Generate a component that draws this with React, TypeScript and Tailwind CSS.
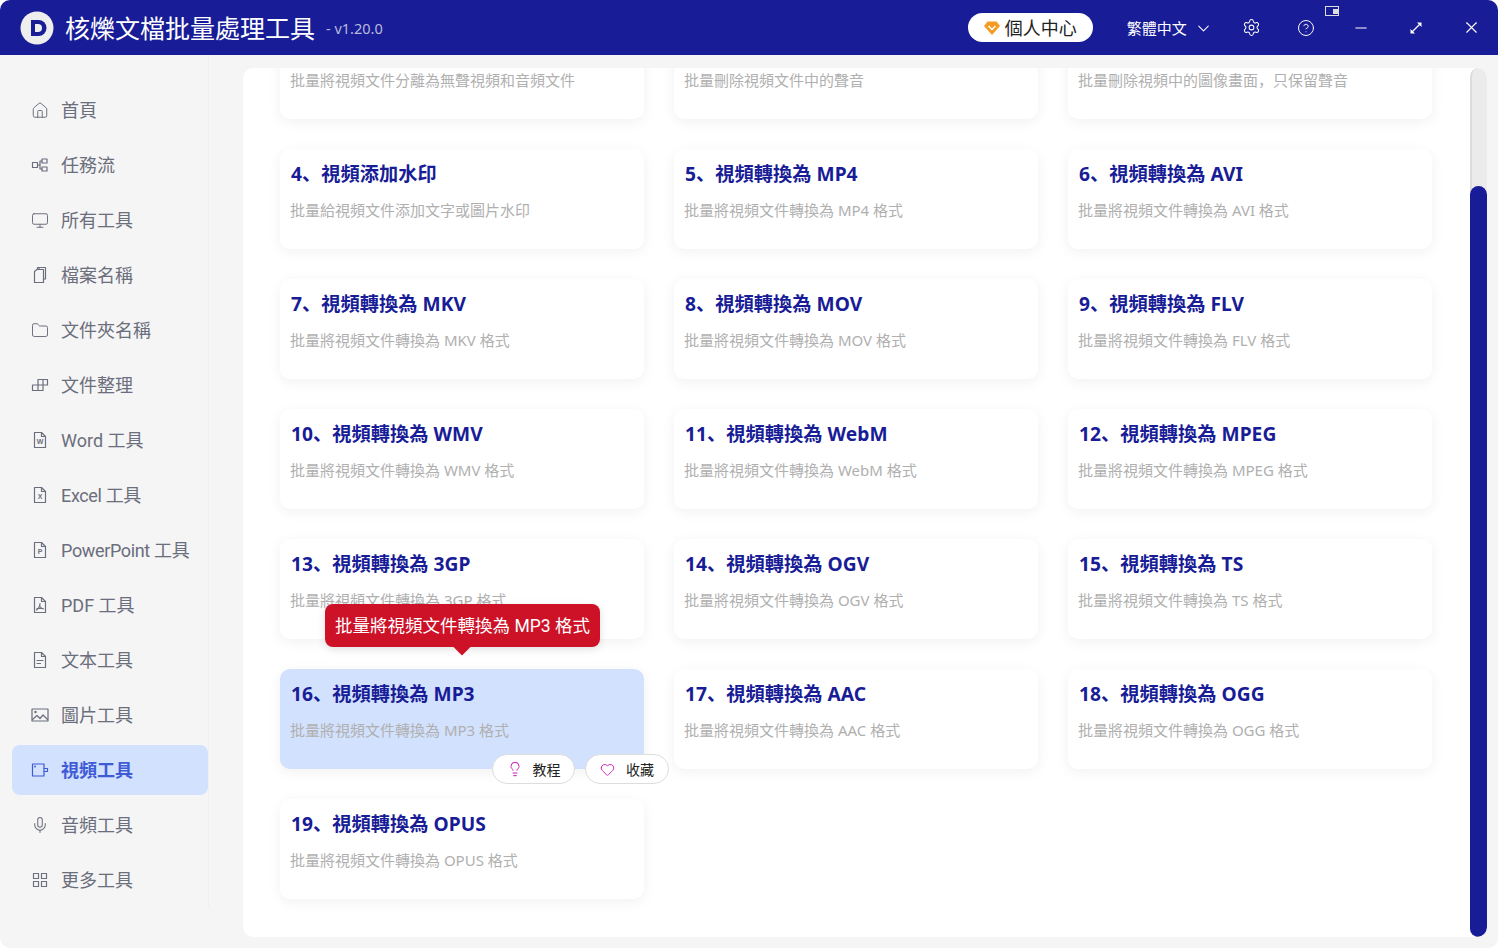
import React from "react";
import { House, Monitor, Folder, Settings, CircleHelp, ChevronDown, Minus, X, Lightbulb, Heart, Mic } from "lucide-react";

const S = ({ children, active }: { children: React.ReactNode; active?: boolean }) => (
  <svg width="18" height="18" viewBox="0 0 18 18" fill="none" stroke={active ? "#3f5bd6" : "#6b6e7c"} strokeWidth="1.2" strokeLinejoin="round" strokeLinecap="round">
    {children}
  </svg>
);
const FileBase = ({ children }: { children?: React.ReactNode }) => (
  <S>
    <path d="M3.500 1.500h7l4 4v11h-11z" />
    <path d="M10.500 1.500v4h4" />
    {children}
  </S>
);
const Letter = ({ c }: { c: string }) => (
  <text x="9" y="13" fontSize="7" fontWeight="700" textAnchor="middle" fill="#6b6e7c" stroke="none" fontFamily="Liberation Sans, sans-serif">{c}</text>
);

const nav: { label: string; icon: React.ReactNode; active?: boolean; track?: string }[] = [
  { label: "首頁", icon: <House size={19} color="#6b6e7c" strokeWidth={1.3} /> },
  { label: "任務流", icon: <S><rect x="1.500" y="6.500" width="5" height="5" /><rect x="11" y="3" width="5" height="4" /><rect x="11" y="11" width="5" height="4" /><path d="M6.500 9H9V5h2M9 9v4h2" /></S> },
  { label: "所有工具", icon: <Monitor size={19} color="#6b6e7c" strokeWidth={1.3} /> },
  { label: "檔案名稱", icon: <S><path d="M6.500 3.500V1.500h8v11.500h-2" /><path d="M3.500 5.500l2.500-2h6.500v13h-9z" /><path d="M8 3.500V1.500" /></S> },
  { label: "文件夾名稱", icon: <Folder size={19} color="#6b6e7c" strokeWidth={1.3} /> },
  { label: "文件整理", icon: <S><path d="M1.500 9h5.500v5.500H1.500zM7 9h5v5.500H7zM7 9V3.500h5V9M12 3.500h4.500V9H12" /></S> },
  { label: "Word 工具", icon: <FileBase><Letter c="W" /></FileBase> },
  { label: "Excel 工具", track: "tracking-[-0.35px]", icon: <FileBase><Letter c="X" /></FileBase> },
  { label: "PowerPoint 工具", track: "tracking-[-0.35px]", icon: <FileBase><Letter c="P" /></FileBase> },
  { label: "PDF 工具", icon: <FileBase><path d="M9 7.500c0 3-1.500 5-3.500 6.500M9 10.500c1 1.500 2 2.200 3.500 2.500M6 12.500h6" /></FileBase> },
  { label: "文本工具", icon: <FileBase><path d="M6 9.500h6M6 12.500h3.500" /></FileBase> },
  { label: "圖片工具", icon: <S><rect x="1" y="3" width="16" height="12" /><path d="M1.500 13.500l4.500-4 3 3 3-3.500 4.500 4.500" /><circle cx="4.500" cy="6" r=".6" /></S> },
  { label: "視頻工具", active: true, icon: <S active><rect x="1.500" y="3" width="11.500" height="12" /><path d="M13 7.500h3.500v3H13" /><circle cx="4" cy="5.500" r=".4" /></S> },
  { label: "音頻工具", icon: <Mic size={20} color="#6b6e7c" strokeWidth={1.4} /> },
  { label: "更多工具", icon: <S><rect x="2.500" y="2.500" width="5" height="5" /><rect x="10.500" y="2.500" width="5" height="5" /><rect x="2.500" y="10.500" width="5" height="5" /><rect x="10.500" y="10.500" width="5" height="5" /></S> },
];

const cards: [string, string][] = [
  ["3、", "批量將視頻文件分離為無聲視頻和音頻文件"],
  ["", "批量刪除視頻文件中的聲音"],
  ["", "批量刪除視頻中的圖像畫面，只保留聲音"],
  ["4、視頻添加水印", "批量給視頻文件添加文字或圖片水印"],
  ["5、視頻轉換為 MP4", "批量將視頻文件轉換為 MP4 格式"],
  ["6、視頻轉換為 AVI", "批量將視頻文件轉換為 AVI 格式"],
  ["7、視頻轉換為 MKV", "批量將視頻文件轉換為 MKV 格式"],
  ["8、視頻轉換為 MOV", "批量將視頻文件轉換為 MOV 格式"],
  ["9、視頻轉換為 FLV", "批量將視頻文件轉換為 FLV 格式"],
  ["10、視頻轉換為 WMV", "批量將視頻文件轉換為 WMV 格式"],
  ["11、視頻轉換為 WebM", "批量將視頻文件轉換為 WebM 格式"],
  ["12、視頻轉換為 MPEG", "批量將視頻文件轉換為 MPEG 格式"],
  ["13、視頻轉換為 3GP", "批量將視頻文件轉換為 3GP 格式"],
  ["14、視頻轉換為 OGV", "批量將視頻文件轉換為 OGV 格式"],
  ["15、視頻轉換為 TS", "批量將視頻文件轉換為 TS 格式"],
  ["16、視頻轉換為 MP3", "批量將視頻文件轉換為 MP3 格式"],
  ["17、視頻轉換為 AAC", "批量將視頻文件轉換為 AAC 格式"],
  ["18、視頻轉換為 OGG", "批量將視頻文件轉換為 OGG 格式"],
  ["19、視頻轉換為 OPUS", "批量將視頻文件轉換為 OPUS 格式"],
];

function Card({ title, desc, index }: { title: string; desc: string; index: number }) {
  const hot = index === 15;
  const first = index < 3;
  return (
    <div className={`relative h-[100px] rounded-[10px] px-[10px] shadow-[0_3px_14px_rgba(0,0,0,0.06)] ${hot ? "bg-[#d2e1fd]" : "bg-white"}`}>
      <div className={`ml-[1px] h-[26px] pt-[12px] whitespace-nowrap text-[19.2px] font-bold leading-[26px] tracking-[0.05px] text-[#181c96] ${first ? "invisible" : ""}`}>{title}</div>
      <div className="mt-[25px] whitespace-nowrap text-[15px] leading-[20px] text-[#b0b0b0]">{desc}</div>
      {hot && (
        <>
          <div className="absolute left-[45px] top-[-65px] z-20 flex h-[43px] w-[275px] items-center justify-center whitespace-nowrap rounded-[8px] bg-[#cd1228] pt-[2px] text-[17.5px] text-white shadow-[0_2px_8px_rgba(0,0,0,0.12)] [font-family:'Roboto','Noto_Sans_CJK_SC',sans-serif]">
            批量將視頻文件轉換為 MP3 格式
            <span className="absolute bottom-[-6px] left-[131px] h-[12px] w-[12px] rotate-45 bg-[#cd1228]" />
          </div>
          <div className="absolute left-[212px] top-[85px] z-20 flex h-[30px] w-[83px] items-center justify-center gap-[10px] rounded-full border border-[#dddddd] bg-white text-[14px] text-[#222222]">
            <Lightbulb size={16} color="#c81eb4" strokeWidth={1.5} />
            教程
          </div>
          <div className="absolute left-[305px] top-[85px] z-20 flex h-[30px] w-[84px] items-center justify-center gap-[11px] rounded-full border border-[#dddddd] bg-white text-[14px] text-[#222222]">
            <Heart size={15} color="#c81eb4" strokeWidth={1.5} />
            收藏
          </div>
        </>
      )}
    </div>
  );
}

export default function App() {
  return (
    <div className="flex h-[948px] w-[1498px] flex-col overflow-hidden rounded-[10px] bg-[#f5f5f5] [font-family:'Noto_Sans','Noto_Sans_CJK_SC',sans-serif]">
      <header className="flex h-[55px] shrink-0 items-center bg-[#181c96] text-white">
        <svg width="34" height="34" viewBox="0 0 34 34" className="ml-[20px]">
          <circle cx="17" cy="17" r="16.500" fill="#eeeeee" />
          <path d="M11 9h7.500a8 8 0 0 1 0 16H11z" fill="#181c96" />
          <path d="M15 13h3a4 4 0 0 1 0 8h-3z" fill="#eeeeee" />
        </svg>
        <div className="ml-[11px] mt-[2px] whitespace-nowrap text-[25px] leading-none">核爍文檔批量處理工具</div>
        <div className="ml-[11px] mt-[3px] text-[14.5px] text-[#b9bbdd]">- v1.20.0</div>

        <div className="ml-[585px] flex h-[29px] w-[125px] items-center justify-center gap-[5px] rounded-full bg-white pt-[1px] text-[18px] text-[#222222]">
          <svg width="16" height="14" viewBox="0 0 16 14">
            <path d="M3.500 0.500h9L16 5l-8 9-8-9z" fill="#f59a23" />
            <path d="M4.500 5l3.500 3.500L11.500 5" fill="none" stroke="#ffffff" strokeWidth="1.500" />
          </svg>
          個人中心
        </div>
        <div className="ml-[34px] mt-[2px] flex items-center gap-[7px] whitespace-nowrap text-[15px]">
          繁體中文
          <ChevronDown size={19} strokeWidth={1.3} />
        </div>
        <Settings size={19} strokeWidth={1.3} className="ml-[29px]" />
        <CircleHelp size={18} strokeWidth={1.3} className="ml-[36px]" />
        <div className="relative h-[17px] w-[9px]">
          <svg width="15" height="11" viewBox="0 0 15 11" className="absolute left-[10px] top-[-13px]">
            <rect x="0.500" y="0.500" width="13" height="9" fill="#181c96" stroke="#dddddd" />
            <rect x="8" y="3" width="6" height="5" fill="#dddddd" />
          </svg>
        </div>
        <Minus size={18} strokeWidth={1.4} className="ml-[28px]" />
        <svg width="16" height="16" viewBox="0 0 16 16" className="ml-[38px]" fill="none" stroke="#fff" strokeWidth="1.300">
          <path d="M4 12L12 4" />
          <path d="M9 2.500h4.500V7L9 2.500zM2.500 9v4.500H7L2.500 9z" fill="#fff" stroke="none" />
        </svg>
        <X size={19} strokeWidth={1.4} className="ml-[38px]" />
      </header>

      <div className="flex min-h-0 flex-1">
        <aside className="mb-[40px] flex w-[209px] shrink-0 flex-col gap-[5px] border-r border-[#f0f0f0] pl-[12px] pt-[30px] [font-family:'Roboto','Noto_Sans_CJK_SC',sans-serif]">
          {nav.map((n) => (
            <div
              key={n.label}
              className={`flex h-[50px] w-[196px] shrink-0 items-center gap-[12px] rounded-[8px] pl-[19px] text-[18px] ${n.active ? "bg-[#d2e1fd] font-bold text-[#3f5bd6]" : "text-[#6b6e7c]"}`}
            >
              <span className="flex w-[18px] shrink-0 justify-center">{n.icon}</span>
              <span className={`whitespace-nowrap pt-[1px] ${n.track ?? ""}`}>{n.label}</span>
            </div>
          ))}
        </aside>

        <main className="mb-[11px] ml-[34px] mt-[13px] flex h-[869px] w-[1244px] overflow-hidden rounded-[10px] bg-white">
          <div className="min-w-0 flex-1 overflow-hidden pl-[37px] pr-[38px]">
            <div className="-mt-[49px] grid grid-cols-3 gap-x-[30px] gap-y-[30px]">
              {cards.map(([t, d], i) => (
                <Card key={i} title={t} desc={d} index={i} />
              ))}
            </div>
          </div>
          <div className="flex h-full w-[17px] shrink-0 flex-col rounded-full border-l-2 border-[#dcdcdc] bg-[#ebebeb]">
            <div className="mt-[118px] -ml-[2px] w-[17px] flex-1 rounded-full bg-[#181c96]" />
          </div>
        </main>
      </div>
    </div>
  );
}
